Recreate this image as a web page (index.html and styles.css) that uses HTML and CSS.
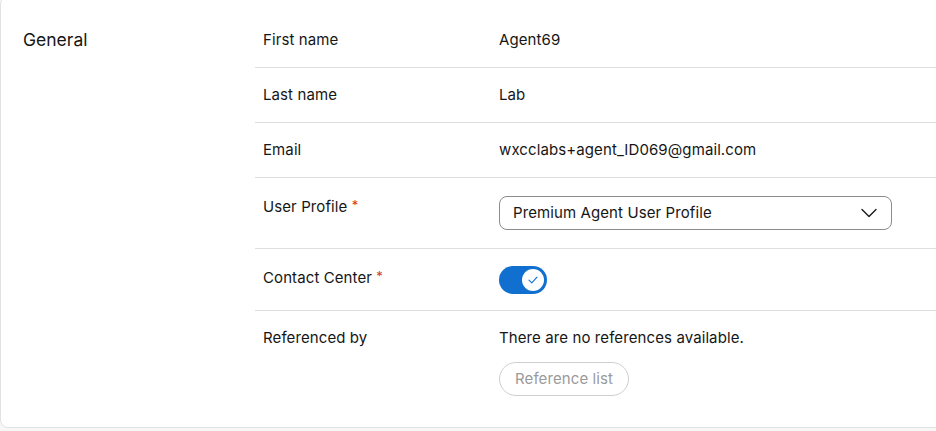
FILE: index.html
```html
<!DOCTYPE html>
<html lang="en">
<head>
<meta charset="utf-8">
<title>General</title>
<link rel="stylesheet" href="styles.css">
</head>
<body>
<div class="card">
  <div class="section-title">General</div>
  <div class="rows">
    <div class="row">
      <div class="label">First name</div>
      <div class="value">Agent69</div>
    </div>
    <div class="row">
      <div class="label">Last name</div>
      <div class="value">Lab</div>
    </div>
    <div class="row">
      <div class="label">Email</div>
      <div class="value">wxcclabs+agent_ID069@gmail.com</div>
    </div>
    <div class="row">
      <div class="label">User Profile <span class="req">*</span></div>
      <div class="value">
        <div class="select">
          <span>Premium Agent User Profile</span>
          <svg class="chevron" width="16" height="10" viewBox="0 0 16 10"><path d="M1 1.5 L8 8.5 L15 1.5" fill="none" stroke="#1a1a1a" stroke-width="1.4" stroke-linecap="round" stroke-linejoin="round"/></svg>
        </div>
      </div>
    </div>
    <div class="row">
      <div class="label">Contact Center <span class="req">*</span></div>
      <div class="value">
        <div class="toggle">
          <div class="knob">
            <svg width="10" height="8" viewBox="0 0 10 8"><path d="M1 4.2 L3.8 6.8 L9 1.2" fill="none" stroke="#1170cf" stroke-width="1.1" stroke-linecap="round" stroke-linejoin="round"/></svg>
          </div>
        </div>
      </div>
    </div>
    <div class="row last">
      <div class="label">Referenced by</div>
      <div class="value">
        <div>There are no references available.</div>
        <button class="ref-btn" type="button">Reference list</button>
      </div>
    </div>
  </div>
</div>
</body>
</html>
```

FILE: styles.css
```css
html, body {
  margin: 0;
  padding: 0;
  background: #f7f7f7;
  overflow: hidden;
}
body {
  font-family: Inter, "Noto Sans", sans-serif;
  color: #161616;
  width: 936px;
  height: 431px;
}
.card {
  box-sizing: border-box;
  margin-top: -4px;
  width: 960px;
  height: 432px;
  background: #ffffff;
  border: 1px solid #e2e2e2;
  border-radius: 8px;
  padding: 16px 0 15px 0;
  display: flex;
}
.section-title {
  width: 232px;
  padding-left: 22px;
  padding-top: 15px;
  font-size: 17.5px;
  line-height: 24px;
  color: #161616;
}
.rows {
  flex: 1;
  display: flex;
  flex-direction: column;
}
.row {
  display: grid;
  grid-template-columns: 236px 1fr;
  padding: 16px 0 16px 8px;
  border-bottom: 1px solid #dedede;
  font-size: 15px;
  line-height: 22px;
  letter-spacing: 0.1px;
}
.row.last {
  border-bottom: none;
}
.label {
  color: #161616;
}
.req {
  color: #d4371c;
  font-size: 13px;
  vertical-align: 2px;
}
.value {
  color: #161616;
  display: flex;
  flex-direction: column;
  align-items: flex-start;
}
.select {
  box-sizing: border-box;
  width: 393px;
  height: 34px;
  margin-top: 2px;
  margin-bottom: 2px;
  border: 1px solid #8c8c8c;
  border-radius: 8px;
  display: flex;
  align-items: center;
  justify-content: space-between;
  padding: 0 14px 0 13px;
}
.chevron {
  display: block;
}
.toggle {
  box-sizing: border-box;
  width: 48px;
  height: 28px;
  margin-top: 1px;
  border-radius: 14px;
  background: #1170cf;
  display: flex;
  align-items: center;
  justify-content: flex-end;
  padding-right: 3px;
}
.knob {
  width: 22px;
  height: 22px;
  border-radius: 50%;
  background: #ffffff;
  display: flex;
  align-items: center;
  justify-content: center;
}
.knob svg {
  display: block;
}
.ref-btn {
  margin-top: 13px;
  box-sizing: border-box;
  height: 34px;
  padding: 0 15px;
  border: 1px solid #cfcfcf;
  border-radius: 17px;
  background: #ffffff;
  color: #9a9a9a;
  font-family: Inter, "Noto Sans", sans-serif;
  font-size: 15px;
  line-height: 22px;
  letter-spacing: 0.1px;
}
```
